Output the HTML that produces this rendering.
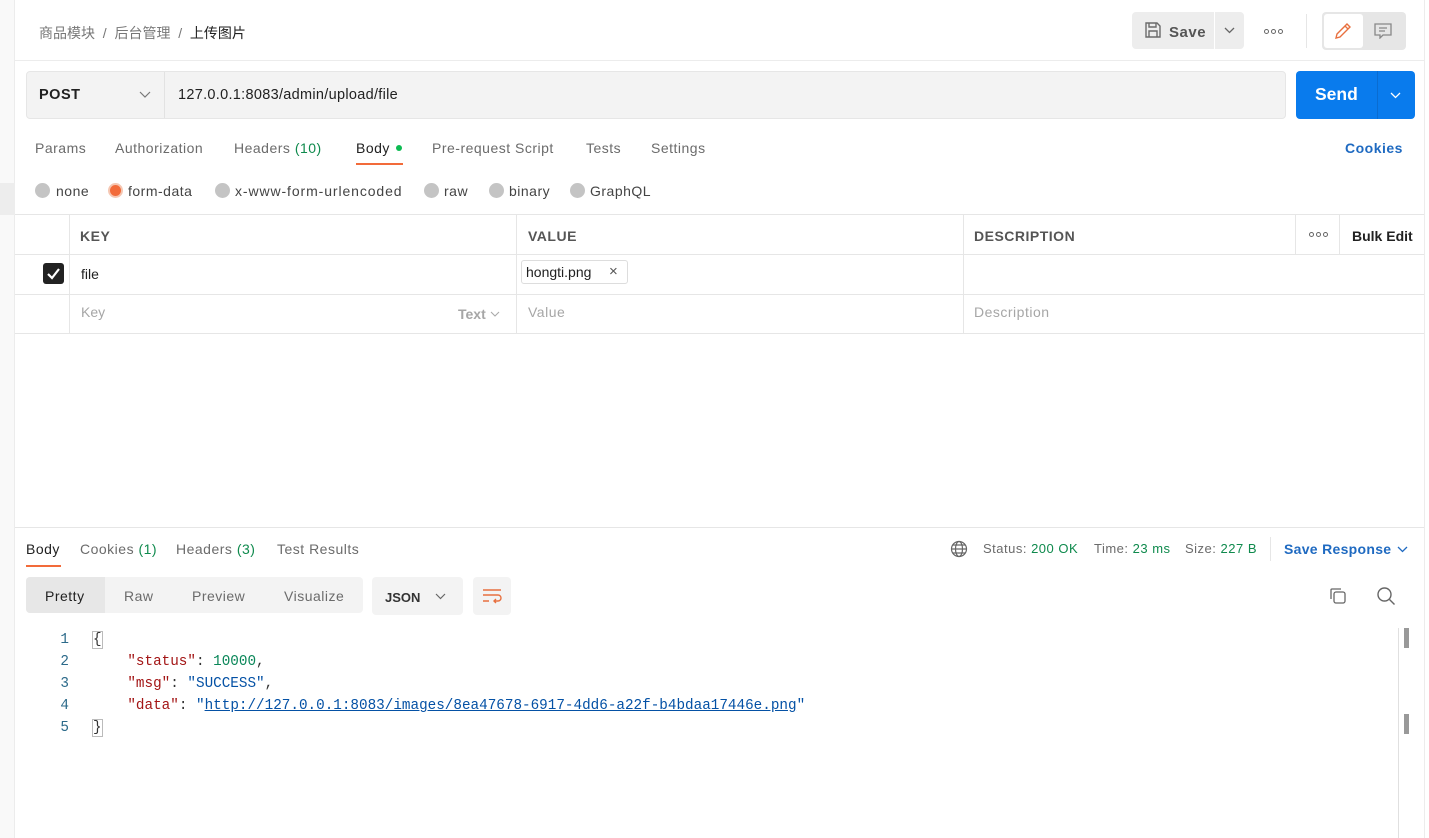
<!DOCTYPE html>
<html><head><meta charset="utf-8"><style>
*{box-sizing:border-box;margin:0;padding:0}
body{width:1429px;height:838px;overflow:hidden;background:#fff;font-family:"Liberation Sans","Noto Sans CJK SC",sans-serif;color:#212121;position:relative}
.a{position:absolute;white-space:nowrap}
.t{letter-spacing:0.5px}
.g{color:#6b6b6b}
.gr{color:#0f8a4d}
.mono{font-family:"Liberation Mono",monospace;font-size:14.3px}
.dots{display:flex;gap:2px}
.dots i{display:block;width:5px;height:5px;border:1.2px solid #666;border-radius:50%}
</style></head><body>
<div class="a" style="left:0;top:0;width:15px;height:838px;background:#f9f9f9;border-right:1px solid #ececec"></div>
<div class="a" style="left:0;top:183px;width:15px;height:32px;background:#ededed"></div>
<div class="a" style="left:1424px;top:0;width:1px;height:838px;background:#ececec"></div>
<div class="a" style="left:15px;top:60px;width:1409px;height:1px;background:#ececec"></div>

<div class="a" style="left:39px;top:23px;font-size:14px;color:#777">商品模块 &nbsp;/&nbsp; 后台管理 &nbsp;/&nbsp; <span style="color:#212121">上传图片</span></div>

<div class="a" style="left:1132px;top:12px;width:82px;height:37px;background:#ededed;border-radius:4px 0 0 4px"></div>
<svg class="a" style="left:1144px;top:21px" width="18" height="18" viewBox="0 0 18 18" fill="none" stroke="#6b6b6b" stroke-width="1.4"><path d="M2 2h11l3 3v11H2z"/><path d="M5 2v4h7V2M5 16v-6h8v6"/></svg>
<div class="a t" style="left:1169px;top:24px;font-size:15px;font-weight:bold;color:#555">Save</div>
<div class="a" style="left:1215px;top:12px;width:29px;height:37px;background:#ededed;border-radius:0 4px 4px 0"></div>
<svg class="a" style="left:1224px;top:27px" width="11" height="8"><path d="M1 1l4.5 4.5L10 1" stroke="#666" fill="none" stroke-width="1.3"/></svg>
<div class="a dots" style="left:1264px;top:29px"><i></i><i></i><i></i></div>
<div class="a" style="left:1306px;top:14px;width:1px;height:34px;background:#e6e6e6"></div>
<div class="a" style="left:1322px;top:12px;width:84px;height:38px;background:#e6e6e6;border-radius:4px"></div>
<div class="a" style="left:1324px;top:14px;width:39px;height:34px;background:#fff;border-radius:3px"></div>
<svg class="a" style="left:1334px;top:22px" width="18" height="18" fill="none" stroke="#e8703f" stroke-width="1.4"><path d="M2 16l1-4L13 2l3 3L6 15z M11 4l3 3"/></svg>
<svg class="a" style="left:1374px;top:23px" width="18" height="16" fill="none" stroke="#888" stroke-width="1.3"><path d="M1 1h16v11H9l-3 3v-3H1z M5 5h8M5 8h6"/></svg>

<div class="a" style="left:26px;top:71px;width:1260px;height:48px;background:#f3f3f3;border:1px solid #e6e6e6;border-radius:4px"></div>
<div class="a" style="left:164px;top:72px;width:1px;height:46px;background:#e2e2e2"></div>
<div class="a t" style="left:39px;top:87px;font-size:14.5px;font-weight:bold">POST</div>
<svg class="a" style="left:139px;top:91px" width="12" height="8"><path d="M1 1l5 5 5-5" stroke="#777" fill="none" stroke-width="1.2"/></svg>
<div class="a t" style="left:178px;top:87px;font-size:14.5px;letter-spacing:0.3px">127.0.0.1:8083/admin/upload/file</div>
<div class="a" style="left:1296px;top:71px;width:119px;height:48px;background:#097bed;border-radius:4px"></div>
<div class="a" style="left:1377px;top:71px;width:1px;height:48px;background:#0a6cd1"></div>
<div class="a" style="left:1315px;top:84px;font-size:17.5px;font-weight:bold;color:#fff">Send</div>
<svg class="a" style="left:1390px;top:92px" width="11" height="7"><path d="M1 1l4.5 4.5L10 1" stroke="#fff" fill="none" stroke-width="1.3"/></svg>

<div class="a g t" style="left:35px;top:140px;font-size:14px">Params</div>
<div class="a g t" style="left:115px;top:140px;font-size:14px">Authorization</div>
<div class="a g t" style="left:234px;top:140px;font-size:14px">Headers <span class="gr">(10)</span></div>
<div class="a t" style="left:356px;top:140px;font-size:14px">Body</div>
<div class="a" style="left:396px;top:145px;width:6px;height:6px;border-radius:50%;background:#0cbb52"></div>
<div class="a" style="left:356px;top:163px;width:47px;height:2px;background:#f26b3a"></div>
<div class="a g t" style="left:432px;top:140px;font-size:14px">Pre-request Script</div>
<div class="a g t" style="left:586px;top:140px;font-size:14px">Tests</div>
<div class="a g t" style="left:651px;top:140px;font-size:14px">Settings</div>
<div class="a t" style="left:1345px;top:140px;font-size:14px;font-weight:bold;color:#1f6ac1">Cookies</div>

<div class="a" style="left:35px;top:183px;width:15px;height:15px;border-radius:50%;background:#c4c4c4"></div>
<div class="a t" style="left:56px;top:183px;font-size:14px;color:#444">none</div>
<div class="a" style="left:108px;top:183px;width:15px;height:15px;border-radius:50%;background:#f26b3a;border:2px solid #f5c7b3"></div>
<div class="a t" style="left:128px;top:183px;font-size:14px;color:#444">form-data</div>
<div class="a" style="left:215px;top:183px;width:15px;height:15px;border-radius:50%;background:#c4c4c4"></div>
<div class="a t" style="left:235px;top:183px;font-size:14px;color:#444;letter-spacing:0.9px">x-www-form-urlencoded</div>
<div class="a" style="left:424px;top:183px;width:15px;height:15px;border-radius:50%;background:#c4c4c4"></div>
<div class="a t" style="left:444px;top:183px;font-size:14px;color:#444">raw</div>
<div class="a" style="left:489px;top:183px;width:15px;height:15px;border-radius:50%;background:#c4c4c4"></div>
<div class="a t" style="left:509px;top:183px;font-size:14px;color:#444">binary</div>
<div class="a" style="left:570px;top:183px;width:15px;height:15px;border-radius:50%;background:#c4c4c4"></div>
<div class="a t" style="left:590px;top:183px;font-size:14px;color:#444">GraphQL</div>

<div class="a" style="left:15px;top:214px;width:1409px;height:1px;background:#e6e6e6"></div>
<div class="a" style="left:15px;top:254px;width:1409px;height:1px;background:#e6e6e6"></div>
<div class="a" style="left:15px;top:294px;width:1409px;height:1px;background:#e6e6e6"></div>
<div class="a" style="left:15px;top:333px;width:1409px;height:1px;background:#e6e6e6"></div>
<div class="a" style="left:69px;top:215px;width:1px;height:118px;background:#e6e6e6"></div>
<div class="a" style="left:516px;top:215px;width:1px;height:118px;background:#e6e6e6"></div>
<div class="a" style="left:963px;top:215px;width:1px;height:118px;background:#e6e6e6"></div>
<div class="a" style="left:1295px;top:215px;width:1px;height:39px;background:#e6e6e6"></div>
<div class="a" style="left:1339px;top:215px;width:1px;height:39px;background:#e6e6e6"></div>
<div class="a t" style="left:80px;top:228px;font-size:14px;font-weight:bold;color:#555">KEY</div>
<div class="a t" style="left:528px;top:228px;font-size:14px;font-weight:bold;color:#555">VALUE</div>
<div class="a t" style="left:974px;top:228px;font-size:14px;font-weight:bold;color:#555">DESCRIPTION</div>
<div class="a dots" style="left:1309px;top:232px"><i></i><i></i><i></i></div>
<div class="a" style="left:1352px;top:228px;font-size:14px;font-weight:bold">Bulk Edit</div>
<div class="a" style="left:43px;top:263px;width:21px;height:21px;border-radius:3px;background:#222"></div>
<svg class="a" style="left:46px;top:267px" width="15" height="13"><path d="M2 7l4 4 7-9" stroke="#fff" fill="none" stroke-width="2.2"/></svg>
<div class="a" style="left:81px;top:266px;font-size:14px">file</div>
<div class="a" style="left:521px;top:260px;width:107px;height:24px;border:1px solid #ddd;border-radius:3px"></div>
<div class="a" style="left:526px;top:264px;font-size:14px">hongti.png</div>
<div class="a" style="left:609px;top:263px;font-size:15px;color:#555">×</div>
<div class="a" style="left:81px;top:304px;font-size:14px;color:#a6a6a6">Key</div>
<div class="a" style="left:458px;top:306px;font-size:14px;font-weight:bold;color:#a6a6a6">Text</div>
<svg class="a" style="left:490px;top:311px" width="10" height="7"><path d="M1 1l4 4 4-4" stroke="#aaa" fill="none" stroke-width="1.1"/></svg>
<div class="a t" style="left:528px;top:304px;font-size:14px;color:#a6a6a6">Value</div>
<div class="a t" style="left:974px;top:304px;font-size:14px;color:#a6a6a6">Description</div>

<div class="a" style="left:15px;top:527px;width:1409px;height:1px;background:#e6e6e6"></div>
<div class="a t" style="left:26px;top:541px;font-size:14px">Body</div>
<div class="a" style="left:26px;top:565px;width:35px;height:2px;background:#f26b3a"></div>
<div class="a g t" style="left:80px;top:541px;font-size:14px">Cookies <span class="gr">(1)</span></div>
<div class="a g t" style="left:176px;top:541px;font-size:14px">Headers <span class="gr">(3)</span></div>
<div class="a g t" style="left:277px;top:541px;font-size:14px">Test Results</div>
<svg class="a" style="left:950px;top:540px" width="18" height="18" fill="none" stroke="#666" stroke-width="1.2"><circle cx="9" cy="9" r="7.5"/><ellipse cx="9" cy="9" rx="3.5" ry="7.5"/><path d="M1.5 9h15M3 5h12M3 13h12"/></svg>
<div class="a g t" style="left:983px;top:541px;font-size:13px">Status: <span class="gr">200 OK</span></div>
<div class="a g t" style="left:1094px;top:541px;font-size:13px">Time: <span class="gr">23 ms</span></div>
<div class="a g t" style="left:1185px;top:541px;font-size:13px">Size: <span class="gr">227 B</span></div>
<div class="a" style="left:1270px;top:537px;width:1px;height:24px;background:#e6e6e6"></div>
<div class="a" style="left:1284px;top:541px;font-size:14px;font-weight:bold;color:#1f6ac1;letter-spacing:0.3px">Save Response</div>
<svg class="a" style="left:1397px;top:546px" width="11" height="7"><path d="M1 1l4.5 4.5L10 1" stroke="#1f6ac1" fill="none" stroke-width="1.3"/></svg>

<div class="a" style="left:26px;top:577px;width:337px;height:36px;background:#f3f3f3;border-radius:4px"></div>
<div class="a" style="left:26px;top:577px;width:79px;height:36px;background:#e7e7e7;border-radius:4px 0 0 4px"></div>
<div class="a t" style="left:45px;top:588px;font-size:14px">Pretty</div>
<div class="a g t" style="left:124px;top:588px;font-size:14px">Raw</div>
<div class="a g t" style="left:192px;top:588px;font-size:14px">Preview</div>
<div class="a g t" style="left:284px;top:588px;font-size:14px">Visualize</div>
<div class="a" style="left:372px;top:577px;width:91px;height:38px;background:#f3f3f3;border-radius:4px"></div>
<div class="a" style="left:385px;top:590px;font-size:13px;font-weight:bold;color:#333">JSON</div>
<svg class="a" style="left:435px;top:593px" width="11" height="7"><path d="M1 1l4.5 4.5L10 1" stroke="#666" fill="none" stroke-width="1.2"/></svg>
<div class="a" style="left:473px;top:577px;width:38px;height:38px;background:#f3f3f3;border-radius:4px"></div>
<svg class="a" style="left:481px;top:587px" width="22" height="18" fill="none" stroke="#e8703f" stroke-width="1.4"><path d="M2 3h18M2 8h15a3 3 0 0 1 0 6h-4M15 12l-2 2 2 2M2 14h6"/></svg>
<svg class="a" style="left:1329px;top:587px" width="18" height="18" fill="none" stroke="#666" stroke-width="1.3"><rect x="5" y="5" width="11" height="11" rx="2"/><path d="M2 12V3a1 1 0 0 1 1-1h9"/></svg>
<svg class="a" style="left:1376px;top:586px" width="20" height="20" fill="none" stroke="#666" stroke-width="1.4"><circle cx="8.5" cy="8.5" r="6.5"/><path d="M13.5 13.5l5 5"/></svg>

<div class="a" style="left:1398px;top:628px;width:1px;height:210px;background:#e0e0e0"></div>
<div class="a" style="left:1404px;top:628px;width:5px;height:20px;background:#999"></div>
<div class="a" style="left:1404px;top:714px;width:5px;height:20px;background:#999"></div>

<div class="a mono" style="left:57px;top:629px;line-height:22px;color:#2c6a8a;text-align:right;width:12px">1<br>2<br>3<br>4<br>5</div>
<div class="a mono" style="left:93px;top:629px;line-height:22px;color:#333">
<span style="outline:1px solid #bbb">{</span><br>
&nbsp;&nbsp;&nbsp;&nbsp;<span style="color:#a31515">"status"</span>: <span style="color:#098658">10000</span>,<br>
&nbsp;&nbsp;&nbsp;&nbsp;<span style="color:#a31515">"msg"</span>: <span style="color:#0451a5">"SUCCESS"</span>,<br>
&nbsp;&nbsp;&nbsp;&nbsp;<span style="color:#a31515">"data"</span>: <span style="color:#0451a5">"<u>http://127.0.0.1:8083/images/8ea47678-6917-4dd6-a22f-b4bdaa17446e.png</u>"</span><br>
<span style="outline:1px solid #bbb">}</span></div>
</body></html>
